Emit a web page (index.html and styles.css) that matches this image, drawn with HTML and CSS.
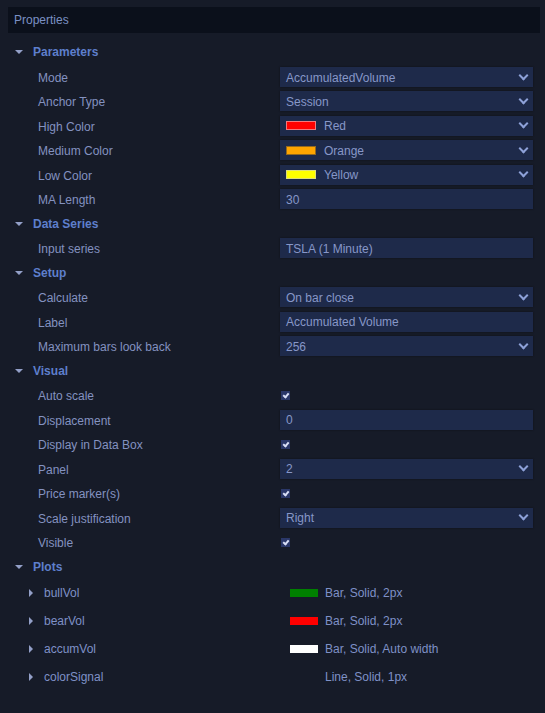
FILE: index.html
```html
<!DOCTYPE html>
<html>
<head>
<meta charset="utf-8">
<link rel="stylesheet" href="styles.css">
</head>
<body>
<div class="panel">
  <div class="title">Properties</div>
  <div class="tree">
    <div class="row section"><span class="tri-down"></span><span>Parameters</span></div>
    <div class="row first"><span class="label">Mode</span><div class="field select"><span class="val">AccumulatedVolume</span><span class="chev"></span></div></div>
    <div class="row"><span class="label">Anchor Type</span><div class="field select"><span class="val">Session</span><span class="chev"></span></div></div>
    <div class="row"><span class="label">High Color</span><div class="field select"><span class="sw sw-red"></span><span class="val">Red</span><span class="chev"></span></div></div>
    <div class="row"><span class="label">Medium Color</span><div class="field select"><span class="sw sw-orange"></span><span class="val">Orange</span><span class="chev"></span></div></div>
    <div class="row"><span class="label">Low Color</span><div class="field select"><span class="sw sw-yellow"></span><span class="val">Yellow</span><span class="chev"></span></div></div>
    <div class="row"><span class="label">MA Length</span><div class="field"><span class="val">30</span></div></div>

    <div class="row section"><span class="tri-down"></span><span>Data Series</span></div>
    <div class="row"><span class="label">Input series</span><div class="field"><span class="val">TSLA (1 Minute)</span></div></div>

    <div class="row section"><span class="tri-down"></span><span>Setup</span></div>
    <div class="row"><span class="label">Calculate</span><div class="field select"><span class="val">On bar close</span><span class="chev"></span></div></div>
    <div class="row"><span class="label">Label</span><div class="field"><span class="val">Accumulated Volume</span></div></div>
    <div class="row"><span class="label">Maximum bars look back</span><div class="field select"><span class="val">256</span><span class="chev"></span></div></div>

    <div class="row section"><span class="tri-down"></span><span>Visual</span></div>
    <div class="row"><span class="label">Auto scale</span><div class="check-cell"><span class="check"></span></div></div>
    <div class="row"><span class="label">Displacement</span><div class="field"><span class="val">0</span></div></div>
    <div class="row"><span class="label">Display in Data Box</span><div class="check-cell"><span class="check"></span></div></div>
    <div class="row"><span class="label">Panel</span><div class="field select"><span class="val">2</span><span class="chev"></span></div></div>
    <div class="row"><span class="label">Price marker(s)</span><div class="check-cell"><span class="check"></span></div></div>
    <div class="row"><span class="label">Scale justification</span><div class="field select"><span class="val">Right</span><span class="chev"></span></div></div>
    <div class="row"><span class="label">Visible</span><div class="check-cell"><span class="check"></span></div></div>

    <div class="row section last"><span class="tri-down"></span><span>Plots</span></div>
    <div class="plots">
      <div class="prow"><span class="plabel"><span class="tri-right"></span>bullVol</span><div class="pval"><span class="psw psw-green"></span><span>Bar, Solid, 2px</span></div></div>
      <div class="prow"><span class="plabel"><span class="tri-right"></span>bearVol</span><div class="pval"><span class="psw psw-red"></span><span>Bar, Solid, 2px</span></div></div>
      <div class="prow"><span class="plabel"><span class="tri-right"></span>accumVol</span><div class="pval"><span class="psw psw-white"></span><span>Bar, Solid, Auto width</span></div></div>
      <div class="prow"><span class="plabel"><span class="tri-right"></span>colorSignal</span><div class="pval"><span class="psw psw-none"></span><span>Line, Solid, 1px</span></div></div>
    </div>
  </div>
</div>
</body>
</html>
```

FILE: styles.css
```css
html, body {
  margin: 0;
  padding: 0;
  background: #161b28;
}
body {
  width: 545px;
  height: 713px;
  overflow: hidden;
  font-family: "Liberation Sans", Arial, sans-serif;
  font-size: 12px;
  color: #8492c0;
}
.panel {
  padding: 7px 5px 0 8px;
}
.title {
  height: 26px;
  background: #0b101b;
  color: #7b90c4;
  line-height: 27px;
  padding-left: 6px;
}
.tree {
  margin-top: 6px;
}
.row {
  height: 24.5px;
  display: grid;
  grid-template-columns: 272px 253px;
  align-items: center;
}
.row.first {
  margin-top: 1.5px;
  height: 24px;
}
.row.last {
  height: 24px;
}
.label {
  padding-left: 30px;
  line-height: 14px;
  padding-top: 2px;
}
.section {
  display: flex;
  align-items: center;
  font-weight: bold;
  color: #5e7fcc;
  padding-top: 1px;
  box-sizing: border-box;
}
.tri-down {
  width: 0;
  height: 0;
  border-left: 4px solid transparent;
  border-right: 4px solid transparent;
  border-top: 4px solid #93a0c8;
  margin-left: 7px;
  margin-right: 10px;
}
.field {
  height: 20px;
  background: #1e2a4a;
  display: flex;
  align-items: center;
  padding-left: 6px;
  padding-right: 5px;
  color: #8797c8;
  box-shadow: 0 0 2px rgba(0, 0, 0, 0.4);
}
.val {
  flex: 1;
  padding-top: 1px;
}
.chev {
  width: 5px;
  height: 5px;
  border-right: 2px solid #8ea1d8;
  border-bottom: 2px solid #8ea1d8;
  transform: rotate(45deg);
  margin-top: -4px;
  margin-right: 1px;
}
.sw {
  width: 28px;
  height: 7px;
  border: 1px solid rgba(230, 220, 230, 0.55);
  margin-right: 8px;
}
.sw-red { background: #ff0000; }
.sw-orange { background: #ffa500; border-color: rgba(120, 90, 40, 0.8); }
.sw-yellow { background: #ffff00; border-color: rgba(200, 200, 200, 0.6); }
.check-cell {
  display: flex;
  align-items: center;
  padding-left: 1px;
}
.check {
  width: 9px;
  height: 9px;
  background: #2a3768;
  position: relative;
}
.check::after {
  content: "";
  position: absolute;
  left: 3px;
  top: 1px;
  width: 2px;
  height: 4px;
  border-right: 2px solid #d8def5;
  border-bottom: 2px solid #d8def5;
  transform: rotate(40deg);
}
.plots {
  padding-top: 0;
}
.prow {
  height: 28px;
  display: grid;
  grid-template-columns: 282px 243px;
  align-items: center;
}
.plabel {
  display: flex;
  align-items: center;
  padding-left: 21px;
  color: #7f91c7;
}
.tri-right {
  width: 0;
  height: 0;
  border-top: 4px solid transparent;
  border-bottom: 4px solid transparent;
  border-left: 4px solid #93a0c8;
  margin-right: 11px;
}
.pval {
  display: flex;
  align-items: center;
  color: #7f91c7;
}
.psw {
  width: 28px;
  height: 8px;
  margin-right: 7px;
}
.psw-green { background: #008000; }
.psw-red { background: #ff0000; }
.psw-white { background: #ffffff; }
.psw-none { background: transparent; }
```
